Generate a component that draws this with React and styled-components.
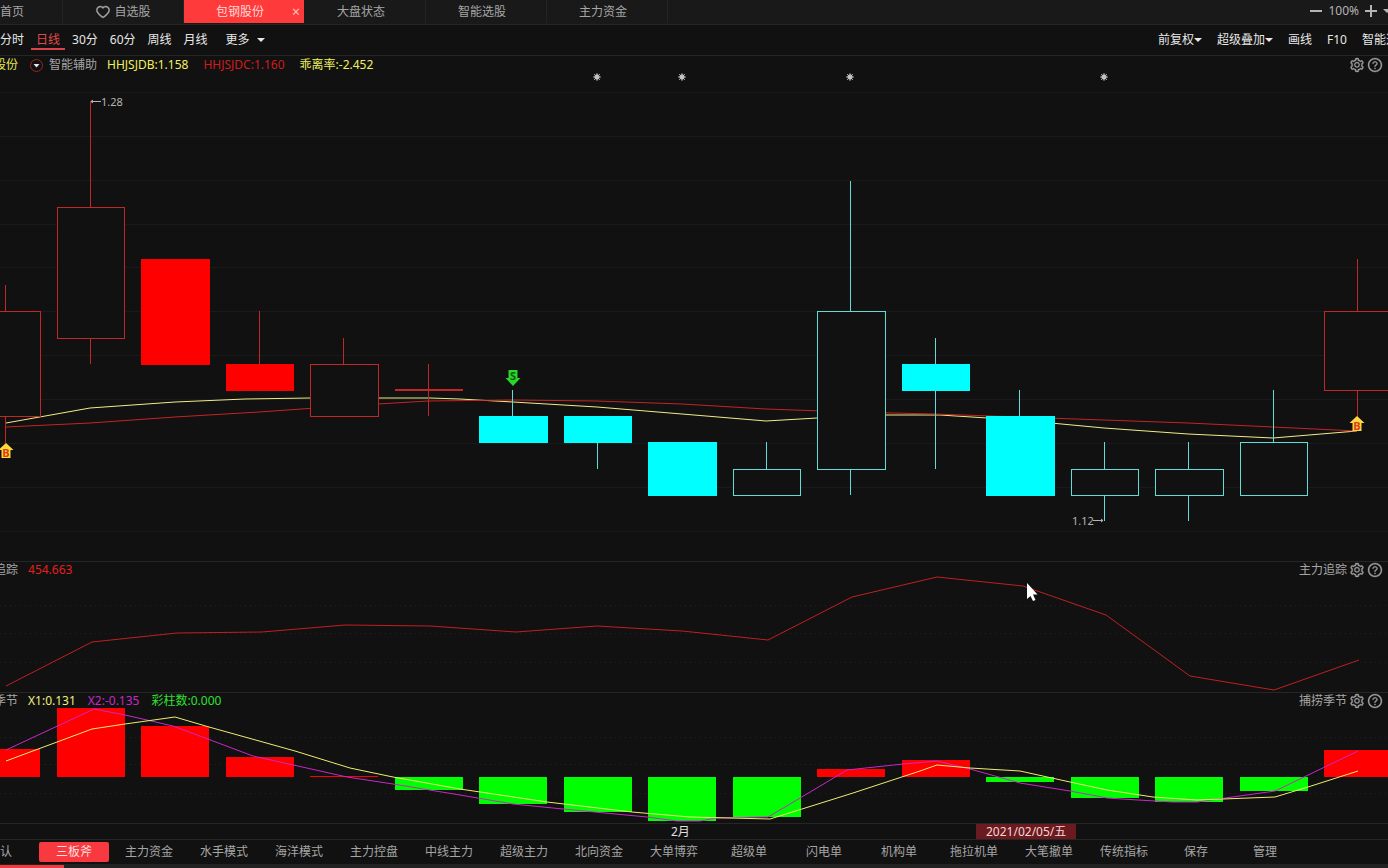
import React, { useState } from 'react';
import styled, { createGlobalStyle, css } from 'styled-components'
import { AiOutlineHeart, AiOutlineQuestionCircle, AiOutlineSetting } from 'react-icons/ai'

const GlobalStyle = createGlobalStyle`
    * {
        box-sizing: border-box;
    }

    body {
        margin: 0;
        background: #111111;
        color: #a6a6a6;
        font: 12px/16px "Noto Sans", "Noto Sans CJK SC", sans-serif;
        overflow-x: hidden;
    }

    button {
        margin: 0;
        padding: 0;
        border: 0;
        background: none;
        color: inherit;
        font: inherit;
        white-space: nowrap;
        cursor: pointer;
    }
`

const Page = styled.div`
    display: flex;
    flex-direction: column;
    overflow: hidden;
`

const TopBar = styled.header`
    display: flex;
    height: 25px;
    background: #191919;
    border-bottom: 1px solid #262626;
`

const TabList = styled.nav`
    display: flex;
    flex: 1;
`

const TopTab = styled.div`
    display: flex;
    align-items: center;
    justify-content: center;
    flex: 0 0 121px;
    height: 23px;
    padding-right: ${p => p.$wide ? '0' : '8px'};
    border-right: 1px solid #242424;

    ${p => p.$home && css`
        flex-basis: 63px;
        justify-content: flex-start;
        padding: 0;
    `}

    ${p => p.$active && css`
        padding: 0 0 0 8px;
        border-right-color: #191919;
        background: #ff3a3a;
        color: #ffd9d9;
    `}
`

const TabLabel = styled.button`
    display: flex;
    align-items: center;
    justify-content: center;
    gap: 3px;
    flex: ${p => p.$grow ? '1' : 'none'};

    svg {
        stroke: currentColor;
        stroke-width: 20;
    }
`

const CloseButton = styled.button`
    width: 16px;
    color: #ffc4c4;
    font-size: 14px;
    text-align: center;
`

const ZoomControl = styled.div`
    display: flex;
    align-items: center;
    gap: 5px;
    height: 22px;
    margin-right: -3px;
    color: #b4b4b4;

    svg {
        display: block;
    }
`

const Toolbar = styled.div`
    display: flex;
    justify-content: space-between;
    height: 31px;
    border-bottom: 1px solid #262626;
    color: #e8e8e8;
`

const ToolGroup = styled.div`
    display: flex;
    align-items: center;
    gap: ${p => p.$gap};
    margin-right: ${p => p.$right ? '-10px' : '0'};
`

const ToolButton = styled.button`
    display: flex;
    align-items: center;
    gap: ${p => p.$wide ? '7px' : '0'};
    margin-left: ${p => p.$wide ? '6px' : '0'};
`

const PeriodButton = styled.button`
    height: 20px;
    margin: 0 ${p => p.$active ? '-5px' : '0'};
    padding: 0 ${p => p.$active ? '5px' : '0'};
    border-top: 2px solid transparent;
    border-bottom: 2px solid ${p => p.$active ? '#d8434b' : 'transparent'};
    color: ${p => p.$active ? '#e04a4a' : 'inherit'};
`

const Caret = styled.span`
    border: 4px solid transparent;
    border-top-color: currentColor;
    border-bottom-width: 0;
`

const Panel = styled.section`
    display: grid;
    border-top: ${p => p.$first ? '0' : '1px solid #262626'};

    > * {
        grid-area: 1 / 1;
        min-width: 0;
    }
`

const PanelHeader = styled.div`
    z-index: 1;
    display: flex;
    align-self: start;
    gap: 10px;
    padding-top: ${p => p.$first ? '1px' : '0'};
    padding-right: 5px;
    margin-left: -6px;
    line-height: 16px;
    white-space: nowrap;
`

const Values = styled.div`
    display: flex;
    gap: ${p => p.$gap || '12px'};
`

const Value = styled.span`
    color: ${p => p.$color};
`

const MenuButton = styled.button`
    display: flex;
    align-items: center;
    gap: 6px;
    margin-left: 2px;
`

const PanelTools = styled.div`
    display: flex;
    align-items: center;
    gap: 2px;
    margin-left: auto;
`

const IconButton = styled.button`
    display: flex;
    color: #a0a0a0;

    svg {
        stroke: currentColor;
        stroke-width: 20;
    }
`

const Chart = styled.svg`
    display: block;
    width: 100%;
    height: auto;
    overflow: hidden;
`

const DateAxis = styled.div`
    display: grid;
    grid-template-columns: 671fr 305fr 412fr;
    height: 16px;
    border-top: 1px solid #262626;
    color: #e0e0e0;
    line-height: 15px;
`

const AxisLabel = styled.span`
    grid-column: ${p => p.$column};
    justify-self: start;
`

const DateBadge = styled(AxisLabel)`
    padding: 0 10px;
    background: #6b1a1f;
    color: #f4d6d6;
`

const StrategyBar = styled.nav`
    display: flex;
    align-items: center;
    gap: 5px;
    height: 25px;
    border-top: 1px solid #262626;
`

const StrategyTab = styled.button`
    flex: 0 0 ${p => p.$width || '70px'};
    height: 20px;
    border-radius: 2px;
    text-align: ${p => p.$edge ? 'left' : 'center'};
    background: ${p => p.$active ? '#f83a40' : 'transparent'};
    color: ${p => p.$active ? '#ffdede' : '#a6a6a6'};
`

const ScrollTrack = styled.div`
    height: 4px;
    background: #222222;
`

const ScrollThumb = styled.div`
    width: 64px;
    height: 4px;
    border-top: 1px solid #222222;
    background: #f03a3e;
`

// all three panes share one coordinate space, each shows its own slice of y
const VIEW_WIDTH = 1388
const RED = '#c02828'
const CYAN = '#62dcd8'

// x, body width, open/close, high/low
const CANDLES = [
    { x: -28, w: 69, top: 311, bottom: 417, high: 285, low: 443, up: true },
    { x: 57, w: 68, top: 207, bottom: 339, high: 101, low: 364, up: true },
    { x: 141, w: 69, top: 259, bottom: 365, high: 259, low: 365, up: true, fill: true },
    { x: 226, w: 68, top: 364, bottom: 391, high: 311, low: 391, up: true, fill: true },
    { x: 310, w: 69, top: 364, bottom: 417, high: 338, low: 417, up: true },
    { x: 395, w: 68, top: 389, bottom: 391, high: 364, low: 416, up: true },
    { x: 479, w: 69, top: 416, bottom: 443, high: 390, low: 443, fill: true },
    { x: 564, w: 68, top: 416, bottom: 443, high: 416, low: 469, fill: true },
    { x: 648, w: 69, top: 442, bottom: 496, high: 442, low: 496, fill: true },
    { x: 733, w: 68, top: 469, bottom: 496, high: 442, low: 496 },
    { x: 817, w: 69, top: 311, bottom: 470, high: 181, low: 495 },
    { x: 902, w: 68, top: 364, bottom: 391, high: 338, low: 469, fill: true },
    { x: 986, w: 69, top: 416, bottom: 496, high: 390, low: 496, fill: true },
    { x: 1071, w: 68, top: 469, bottom: 496, high: 442, low: 521 },
    { x: 1155, w: 69, top: 469, bottom: 496, high: 442, low: 521 },
    { x: 1240, w: 68, top: 442, bottom: 496, high: 390, low: 496 },
    { x: 1324, w: 69, top: 311, bottom: 391, high: 259, low: 417, up: true },
]

const FAST_LINE = '6,423 90,408 175,402 245,399 310,398 430,398 460,399 513,402 597,407 682,414 766,421 817,418 886,415 940,415 1019,420 1104,428 1188,434 1273,438 1357,431'
const SLOW_LINE = '6,427 90,423 175,417 259,412 344,406 428,401 513,400 597,401 682,404 766,409 850,412 935,414 1019,417 1104,420 1188,423 1273,427 1357,431'
const FORCE_LINE = '6,686 92,642 177,633 262,632 345,625 430,626 516,632 597,626 682,631 768,640 852,597 937,577 1023,586 1106,615 1190,676 1274,690 1359,660'
const X1_LINE = '6,761 92,729 125,724 175,717 209,727 295,751 350,768 393,777 460,789 547,802 632,812 690,817 770,819 802,809 853,793 920,771 937,765 970,768 1020,771 1070,782 1107,790 1153,797 1197,800 1275,797 1308,787 1358,771'
const X2_LINE = '6,750 94,709 125,715 173,726 253,756 347,777 393,784 460,795 513,804 563,809 647,817 677,821 700,821 717,818 768,817 785,807 847,770 903,764 937,761 970,769 1020,783 1070,791 1107,798 1138,800 1173,802 1197,802 1275,791 1358,751'

const BASELINE = 777
const BARS = [749, 708, 726, 757, 776, 790, 804, 812, 821, 817, 769, 760, 782, 798, 802, 791, 750]

const STARS = [597, 682, 850, 1104]

const PERIODS = ['分时', '日线', '30分', '60分', '周线', '月线']

const STRATEGIES = [
    '三板斧', '主力资金', '水手模式', '海洋模式', '主力控盘', '中线主力', '超级主力', '北向资金',
    '大单博弈', '超级单', '闪电单', '机构单', '拖拉机单', '大笔撤单', '传统指标',
]

function GridLines({ rows, dotted }) {
    return rows.map(y => (
        <line
            key={y}
            x1="0"
            x2={VIEW_WIDTH}
            y1={y + 0.5}
            y2={y + 0.5}
            stroke={dotted ? '#222222' : '#1a1a1a'}
            strokeDasharray={dotted ? '1 4' : undefined} />
    ))
}

function Polyline({ points, color }) {
    return <polyline points={points} fill="none" stroke={color} strokeWidth="1" />
}

function Candle({ x, w, top, bottom, high, low, up, fill }) {
    const color = up ? RED : CYAN
    const solid = up ? '#ff0000' : '#00ffff'
    const mid = x + 33.5
    return (
        <g shapeRendering="crispEdges">
            <path d={`M${mid} ${high}V${top}M${mid} ${bottom}V${low}`} stroke={color} />
            {fill
                ? <rect x={x} y={top} width={w} height={bottom - top} fill={solid} />
                : <rect
                    x={x + 0.5}
                    y={top + 0.5}
                    width={w - 1}
                    height={bottom - top - 1}
                    fill="#111111"
                    stroke={color} />}
        </g>
    )
}

function Star({ x }) {
    return (
        <g transform={`translate(${x} 77)`} stroke="#c0c0c0">
            <circle r="2.2" fill="#d0d0d0" />
            <path d="M0 -4V4M-4 0H4M-3 -3L3 3M-3 3L3 -3" strokeWidth="0.8" />
        </g>
    )
}

function BuyMark({ x, y }) {
    return (
        <g transform={`translate(${x} ${y})`}>
            <path d="M0 0L7.5 7H4.5V15H-4.5V7H-7.5Z" fill="#ffd83c" />
            <text y="14" textAnchor="middle" fontSize="11" fontWeight="700" fill="#d8401c">B</text>
        </g>
    )
}

function SellMark({ x, y }) {
    return (
        <g transform={`translate(${x} ${y})`}>
            <path d="M-4.5 0H4.5V8H7.5L0 16L-7.5 8H-4.5Z" fill="#2bd52b" />
            <text y="10" textAnchor="middle" fontSize="11" fontWeight="700" fill="#0b5a12">S</text>
        </g>
    )
}

function Tools({ title }) {
    return (
        <PanelTools>
            {title && <span>{title}</span>}
            <IconButton type="button" aria-label="设置">
                <AiOutlineSetting size={16} />
            </IconButton>
            <IconButton type="button" aria-label="帮助">
                <AiOutlineQuestionCircle size={16} />
            </IconButton>
        </PanelTools>
    )
}

function PriceChart() {
    return (
        <Chart viewBox={`0 56 ${VIEW_WIDTH} 505`}>
            <GridLines rows={[92, 136, 180, 224, 267, 311, 355, 399, 443, 487, 531]} />
            <Polyline points={FAST_LINE} color="#f0ec88" />
            <Polyline points={SLOW_LINE} color="#c42424" />
            {CANDLES.map(c => <Candle key={c.x} {...c} />)}
            {STARS.map(x => <Star key={x} x={x} />)}
            <BuyMark x={6} y={443} />
            <BuyMark x={1357} y={416} />
            <SellMark x={513} y={370} />
            <path d="M101 101.5H91M93 100L91 101.5L93 103" fill="none" stroke="#b4b4b4" />
            <text x="101" y="106" fontSize="11" fill="#b4b4b4">1.28</text>
            <path d="M1093 520.5H1103M1101 519L1103 520.5L1101 522" fill="none" stroke="#b4b4b4" />
            <text x="1072" y="525" fontSize="11" fill="#b4b4b4">1.12</text>
        </Chart>
    )
}

function ForceChart() {
    return (
        <Chart viewBox={`0 562 ${VIEW_WIDTH} 130`}>
            <GridLines rows={[605, 633, 662]} dotted />
            <Polyline points={FORCE_LINE} color="#c02020" />
            <path d="M1027 583V599L1030.5 596L1033 601L1035.5 600L1033 594.5H1037.5Z" fill="#ffffff" />
        </Chart>
    )
}

function SeasonChart() {
    return (
        <Chart viewBox={`0 693 ${VIEW_WIDTH} 130`}>
            <GridLines rows={[737, 764, 793]} dotted />
            {BARS.map((y, i) => (
                <rect
                    key={i}
                    x={Math.floor(-27.5 + i * 84.5)}
                    y={Math.min(y, BASELINE)}
                    width="68"
                    height={Math.abs(BASELINE - y)}
                    fill={y < BASELINE ? '#ff0000' : '#00ff00'} />
            ))}
            <Polyline points={X2_LINE} color="#c828c8" />
            <Polyline points={X1_LINE} color="#f0ec70" />
        </Chart>
    )
}

function App() {
    const [period, setPeriod] = useState('日线')
    const [strategy, setStrategy] = useState('三板斧')

    return (
        <Page>
            <GlobalStyle />
            <TopBar>
                <TabList>
                    <TopTab $home><TabLabel type="button">首页</TabLabel></TopTab>
                    <TopTab $wide>
                        <TabLabel type="button"><AiOutlineHeart size={16} />自选股</TabLabel>
                    </TopTab>
                    <TopTab $active>
                        <TabLabel type="button" $grow>包钢股份</TabLabel>
                        <CloseButton type="button" aria-label="关闭">×</CloseButton>
                    </TopTab>
                    <TopTab><TabLabel type="button">大盘状态</TabLabel></TopTab>
                    <TopTab><TabLabel type="button">智能选股</TabLabel></TopTab>
                    <TopTab><TabLabel type="button">主力资金</TabLabel></TopTab>
                </TabList>
                <ZoomControl>
                    <button type="button" aria-label="缩小">
                        <svg width="14" height="14"><path d="M1 7H13" stroke="currentColor" strokeWidth="2" /></svg>
                    </button>
                    <span>100%</span>
                    <button type="button" aria-label="放大">
                        <svg width="14" height="14"><path d="M1 7H13M7 1V13" stroke="currentColor" strokeWidth="2" /></svg>
                    </button>
                    <Caret />
                </ZoomControl>
            </TopBar>

            <Toolbar>
                <ToolGroup $gap="12px">
                    {PERIODS.map(name => (
                        <PeriodButton
                            key={name}
                            type="button"
                            $active={name === period}
                            onClick={() => setPeriod(name)}>
                            {name}
                        </PeriodButton>
                    ))}
                    <ToolButton type="button" $wide>更多<Caret /></ToolButton>
                </ToolGroup>
                <ToolGroup $gap="15px" $right>
                    <ToolButton type="button">前复权<Caret /></ToolButton>
                    <ToolButton type="button">超级叠加<Caret /></ToolButton>
                    <ToolButton type="button">画线</ToolButton>
                    <ToolButton type="button">F10</ToolButton>
                    <ToolButton type="button">智能选</ToolButton>
                </ToolGroup>
            </Toolbar>

            <Panel $first>
                <PanelHeader $first>
                    <Value $color="#e8e850">股份</Value>
                    <MenuButton type="button">
                        <svg width="13" height="13">
                            <circle cx="6.5" cy="6.5" r="6" fill="none" stroke="#9a2424" />
                            <path d="M3.5 5H9.5L6.5 8.5Z" fill="#e8e8e8" />
                        </svg>
                        智能辅助
                    </MenuButton>
                    <Values $gap="15px">
                        <Value $color="#f0f060">HHJSJDB:1.158</Value>
                        <Value $color="#d01c1c">HHJSJDC:1.160</Value>
                        <Value $color="#f0f060">乖离率:-2.452</Value>
                    </Values>
                    <Tools />
                </PanelHeader>
                <PriceChart />
            </Panel>

            <Panel>
                <PanelHeader>
                    <span>追踪</span>
                    <Value $color="#e02020">454.663</Value>
                    <Tools title="主力追踪" />
                </PanelHeader>
                <ForceChart />
            </Panel>

            <Panel>
                <PanelHeader>
                    <span>季节</span>
                    <Values>
                        <Value $color="#f0f080">X1:0.131</Value>
                        <Value $color="#c828c8">X2:-0.135</Value>
                        <Value $color="#30e030">彩柱数:0.000</Value>
                    </Values>
                    <Tools title="捕捞季节" />
                </PanelHeader>
                <SeasonChart />
            </Panel>

            <DateAxis>
                <AxisLabel $column={2}>2月</AxisLabel>
                <DateBadge $column={3}>2021/02/05/五</DateBadge>
            </DateAxis>

            <StrategyBar>
                <StrategyTab type="button" $width="34px" $edge>认</StrategyTab>
                {STRATEGIES.map(name => (
                    <StrategyTab
                        key={name}
                        type="button"
                        $active={name === strategy}
                        onClick={() => setStrategy(name)}>
                        {name}
                    </StrategyTab>
                ))}
                <StrategyTab type="button" $width="64px">保存</StrategyTab>
                <StrategyTab type="button" $width="64px">管理</StrategyTab>
            </StrategyBar>
            <ScrollTrack><ScrollThumb /></ScrollTrack>
        </Page>
    );
}

export default App
